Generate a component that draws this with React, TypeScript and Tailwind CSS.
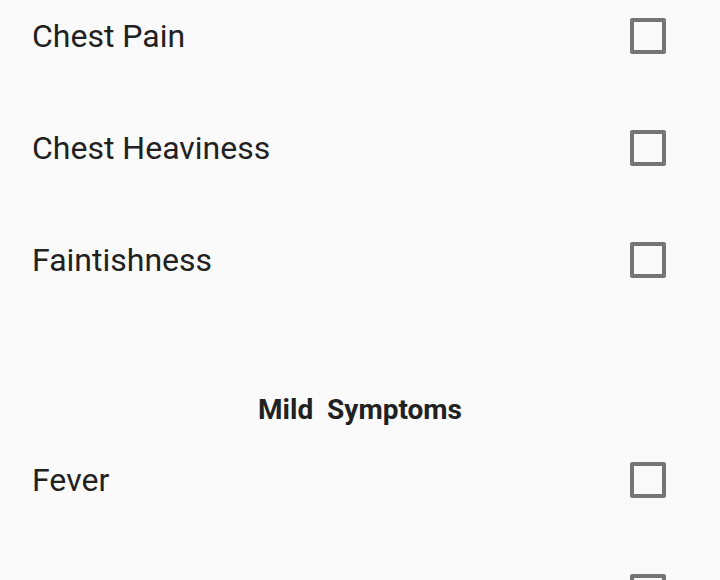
import React from "react";

const severe = ["Chest Pain", "Chest Heaviness", "Faintishness"];
const mild = ["Fever", "Cough"];

function Row({ label }: { label: string }) {
  return (
    <div className="flex h-[112px] items-center justify-between pl-[32px] pr-[54px]">
      <span className="text-[32px] leading-none text-[#212121]">{label}</span>
      <div className="h-[36px] w-[36px] rounded-[2px] border-[4px] border-[#757575]" />
    </div>
  );
}

export default function App() {
  return (
    <div
      className="h-[580px] w-[720px] overflow-hidden bg-[#fafafa]"
      style={{ fontFamily: "Roboto, 'Liberation Sans', sans-serif" }}
    >
      <div className="-mt-[20px]">
        {severe.map((s) => (
          <Row key={s} label={s} />
        ))}
      </div>
      <div className="mt-[80px] flex h-[28px] items-center justify-center">
        <h2 className="whitespace-pre text-[28px] font-bold leading-none text-[#212121]">
          {"Mild  Symptoms"}
        </h2>
      </div>
      {mild.map((s) => (
        <Row key={s} label={s} />
      ))}
    </div>
  );
}
